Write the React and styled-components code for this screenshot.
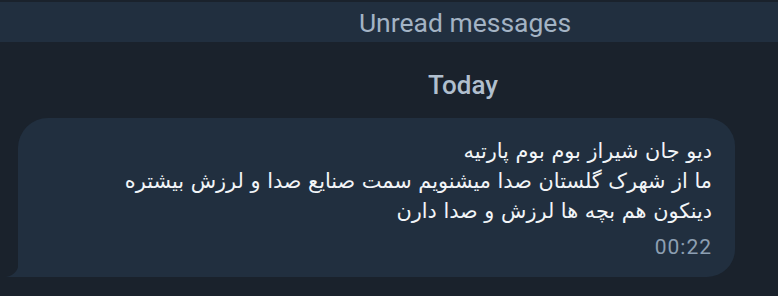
import React from "react";
import styled, { createGlobalStyle } from "styled-components";

const Global = createGlobalStyle`
  html, body { margin: 0; padding: 0; background: #1a222c; }
  body { width: 778px; height: 296px; overflow: hidden; font-family: Roboto, "Noto Sans", sans-serif; }
`;

const Page = styled.div`
  width: 778px;
  height: 296px;
  background: #1a222c;
  padding-top: 2px;
  box-sizing: border-box;
  display: flex;
  flex-direction: column;
`;

const UnreadBar = styled.div`
  height: 40px;
  background: #212f3f;
  display: flex;
  align-items: center;
  justify-content: center;
  padding-left: 152px;
  color: #a3b3c4;
  font-size: 26.5px;
  font-family: Roboto, sans-serif;
`;

const DateLabel = styled.div`
  height: 76px;
  box-sizing: border-box;
  padding-top: 10px;
  display: flex;
  align-items: center;
  justify-content: center;
  padding-left: 148px;
  color: #b0bfce;
  font-size: 26px;
  font-weight: 500;
  font-family: Roboto, sans-serif;
`;

const Row = styled.div`
  display: flex;
  padding-left: 18px;
`;

const Bubble = styled.div`
  position: relative;
  width: 717px;
  height: 159px;
  box-sizing: border-box;
  background: #212f3f;
  border-radius: 30px 28px 28px 0;
  padding: 18px 23px 0 0;
  display: flex;
  flex-direction: column;
  align-items: flex-end;
`;

const Tail = styled.svg`
  position: absolute;
  left: -12px;
  bottom: 0;
`;

const Text = styled.div`
  direction: rtl;
  text-align: right;
  color: #f2f5f8;
  font-family: "DejaVu Sans", sans-serif;
  font-size: 20.8px;
  line-height: 30px;
`;

const Time = styled.div`
  margin-top: 9px;
  color: #8d9fb2;
  font-family: Roboto, sans-serif;
  font-size: 21px;
  letter-spacing: 1px;
  margin-right: 0px;
`;

export default function App() {
  return (
    <>
      <Global />
      <Page>
        <UnreadBar>Unread messages</UnreadBar>
        <DateLabel>Today</DateLabel>
        <Row>
          <Bubble>
            <Tail width="30" height="22" viewBox="0 0 30 22">
              <path d="M12 0 L30 0 L30 22 L0 22 C6 21 11 17 12 12 Z" fill="#212f3f" />
            </Tail>
            <Text>
              دیو جان شیراز بوم بوم پارتیه
              <br />
              ما از شهرک گلستان صدا میشنویم سمت صنایع صدا و لرزش بیشتره
              <br />
              دینکون هم بچه ها لرزش و صدا دارن
            </Text>
            <Time>00:22</Time>
          </Bubble>
        </Row>
      </Page>
    </>
  );
}
